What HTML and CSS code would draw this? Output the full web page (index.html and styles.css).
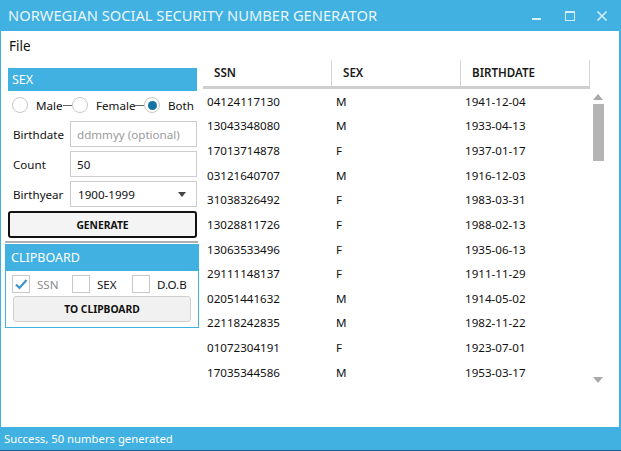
FILE: index.html
```html
<!DOCTYPE html>
<html>
<head>
<meta charset="utf-8">
<link rel="stylesheet" href="styles.css">
</head>
<body>
<div class="window">
  <div class="titlebar">
    <div class="title">NORWEGIAN SOCIAL SECURITY NUMBER GENERATOR</div>
    <div class="controls">
      <svg class="ctl" width="12" height="12" viewBox="0 0 12 12"><rect x="0" y="8" width="9" height="2" fill="#d6eefa"/></svg>
      <svg class="ctl" width="12" height="12" viewBox="0 0 12 12"><rect x="1.5" y="1.5" width="9" height="9" fill="none" stroke="#d6eefa" stroke-width="1"/><rect x="1" y="1" width="10" height="2" fill="#d6eefa"/></svg>
      <svg class="ctl" width="12" height="12" viewBox="0 0 12 12"><path d="M1.5 1.5 L10.5 10.5 M10.5 1.5 L1.5 10.5" stroke="#d6eefa" stroke-width="1.6"/></svg>
    </div>
  </div>
  <div class="menu"><span class="menu-item">File</span></div>
  <div class="main">
    <div class="left">
      <div class="sexbox">
        <div class="group-head">SEX</div>
        <div class="radios">
          <div class="ritem w1"><span class="radio"></span><span class="rlabel">Male</span><span class="rline"></span></div>
          <div class="ritem w2"><span class="radio"></span><span class="rlabel">Female</span><span class="rline"></span></div>
          <div class="ritem"><span class="radio on"></span><span class="rlabel">Both</span></div>
        </div>
        <div class="field">
          <span class="flabel">Birthdate</span>
          <div class="input placeholder">ddmmyy (optional)</div>
        </div>
        <div class="field">
          <span class="flabel">Count</span>
          <div class="input">50</div>
        </div>
        <div class="field">
          <span class="flabel">Birthyear</span>
          <div class="input combo"><span>1900-1999</span><svg width="8" height="5" viewBox="0 0 8 5"><path d="M0 0 H8 L4 5 Z" fill="#444"/></svg></div>
        </div>
        <div class="btn-generate">GENERATE</div>
      </div>
      <div class="sep"></div>
      <div class="clipbox">
        <div class="group-head clip-head">CLIPBOARD</div>
        <div class="clip-body">
          <div class="checks">
            <span class="check on"><svg width="14" height="12" viewBox="0 0 14 12"><path d="M2 6.5 L5.5 10 L12.5 2" fill="none" stroke="#3d94c6" stroke-width="2.2"/></svg></span><span class="clabel dim">SSN</span>
            <span class="check"></span><span class="clabel">SEX</span>
            <span class="check"></span><span class="clabel">D.O.B</span>
          </div>
          <div class="btn-clip">TO CLIPBOARD</div>
        </div>
      </div>
    </div>
    <div class="right">
      <div class="thead">
        <div class="th">SSN</div>
        <div class="th">SEX</div>
        <div class="th">BIRTHDATE</div>
      </div>
      <div class="tbody-wrap">
        <div class="tbody">
          <div class="tr"><span>04124117130</span><span>M</span><span>1941-12-04</span></div>
          <div class="tr"><span>13043348080</span><span>M</span><span>1933-04-13</span></div>
          <div class="tr"><span>17013714878</span><span>F</span><span>1937-01-17</span></div>
          <div class="tr"><span>03121640707</span><span>M</span><span>1916-12-03</span></div>
          <div class="tr"><span>31038326492</span><span>F</span><span>1983-03-31</span></div>
          <div class="tr"><span>13028811726</span><span>F</span><span>1988-02-13</span></div>
          <div class="tr"><span>13063533496</span><span>F</span><span>1935-06-13</span></div>
          <div class="tr"><span>29111148137</span><span>F</span><span>1911-11-29</span></div>
          <div class="tr"><span>02051441632</span><span>M</span><span>1914-05-02</span></div>
          <div class="tr"><span>22118242835</span><span>M</span><span>1982-11-22</span></div>
          <div class="tr"><span>01072304191</span><span>F</span><span>1923-07-01</span></div>
          <div class="tr"><span>17035344586</span><span>M</span><span>1953-03-17</span></div>
        </div>
        <div class="scrollbar">
          <svg width="10" height="6" viewBox="0 0 10 6"><path d="M0 6 L5 0 L10 6 Z" fill="#a9a9a9"/></svg>
          <div class="thumb"></div>
          <div class="track"></div>
          <svg width="10" height="6" viewBox="0 0 10 6"><path d="M0 0 L10 0 L5 6 Z" fill="#a9a9a9"/></svg>
        </div>
      </div>
    </div>
  </div>
  <div class="status">Success, 50 numbers generated</div>
</div>
</body>
</html>
```

FILE: styles.css
```css
* { box-sizing: border-box; }
html, body { margin: 0; padding: 0; }
body {
  width: 621px;
  height: 451px;
  overflow: hidden;
  font-family: "Noto Sans", "Open Sans", sans-serif;
  color: #111;
  background: #fff;
}
.window {
  width: 621px;
  height: 451px;
  border-left: 1px solid #41b1e1;
  border-right: 2px solid #41b1e1;
  display: flex;
  flex-direction: column;
}
.titlebar {
  height: 31px;
  background: #41b1e1;
  display: flex;
  align-items: center;
  justify-content: space-between;
  margin: 0 -2px 0 -1px;
  padding-left: 8px;
}
.title {
  color: #eaf6fc;
  font-size: 14.7px;
  white-space: nowrap;
  padding-bottom: 1px;
}
.controls {
  display: flex;
  gap: 20px;
  padding-right: 13px;
  padding-top: 1px;
}
.ctl { display: block; }
.menu {
  height: 29px;
  padding: 6px 0 0 8px;
  font-size: 13.5px;
}
.main {
  flex: 1;
  display: flex;
  padding-left: 4px;
}
.left {
  width: 194px;
  padding-top: 8px;
  display: flex;
  flex-direction: column;
}
.sexbox {
  margin: 0 2px 0 3px;
}
.group-head {
  background: #41b1e1;
  color: #fff;
  font-size: 12.5px;
  height: 23px;
  line-height: 23px;
  padding-left: 4px;
}
.radios {
  display: flex;
  align-items: center;
  height: 28px;
  padding-left: 4px;
  font-size: 11.6px;
}
.ritem {
  display: flex;
  align-items: center;
  white-space: nowrap;
}
.ritem.w1 { width: 60px; }
.ritem.w2 { width: 72px; }
.radio {
  width: 16px;
  height: 16px;
  border: 1px solid #c8c8c8;
  border-radius: 50%;
  display: inline-flex;
  align-items: center;
  justify-content: center;
  flex: none;
}
.radio.on::after {
  content: "";
  width: 9px;
  height: 9px;
  border-radius: 50%;
  background: #1473a6;
}
.rlabel { margin-left: 8px; }
.rline {
  flex: 1;
  height: 1px;
  background: #666;
}
.field {
  display: flex;
  align-items: center;
  height: 26px;
  margin-top: 4px;
}
.radios + .field { margin-top: 2px; }
.flabel {
  width: 62px;
  padding-left: 5px;
  font-size: 11.6px;
}
.input {
  flex: 1;
  height: 26px;
  border: 1px solid #cccccc;
  font-size: 11.6px;
  display: flex;
  align-items: center;
  padding-left: 6px;
  color: #111;
}
.input.placeholder { color: #9a9a9a; }
.combo {
  justify-content: space-between;
  padding-left: 7px;
  padding-right: 10px;
}
.combo svg { display: block; }
.btn-generate {
  margin-top: 4px;
  height: 27px;
  border: 2px solid #111;
  border-radius: 3px;
  background: #f4f4f4;
  display: flex;
  align-items: center;
  justify-content: center;
  font-weight: bold;
  font-size: 10.3px;
}
.sep {
  height: 2px;
  background: #b0b0b0;
  margin: 3px 1px 0 0;
}
.clipbox {
  margin-top: 1px;
  border: 1px solid #41b1e1;
  width: 194px;
}
.clip-head {
  height: 26px;
  line-height: 26px;
  padding-left: 5px;
}
.clip-body {
  padding: 4px 6px 5px 6px;
}
.checks {
  display: flex;
  align-items: center;
  height: 18px;
  font-size: 11.6px;
}
.check {
  width: 18px;
  height: 18px;
  border: 1px solid #c8c8c8;
  display: inline-flex;
  align-items: center;
  justify-content: center;
  flex: none;
}
.check svg { display: block; }
.clabel { margin-left: 7px; width: 36px; }
.clabel.dim { color: #8a8a8a; }
.btn-clip {
  margin: 3px 1px 0 1px;
  height: 26px;
  border: 1px solid #cfcfcf;
  border-radius: 3px;
  background: #f1f1f1;
  display: flex;
  align-items: center;
  justify-content: center;
  font-weight: bold;
  font-size: 10.3px;
}
.right {
  flex: 1;
  margin-left: 4px;
  display: flex;
  flex-direction: column;
}
.thead {
  display: flex;
  height: 29px;
  width: 387px;
  border-bottom: 3px solid #cfcfcf;
}
.th {
  width: 129px;
  border-right: 1px solid #d4d4d4;
  font-size: 11.6px;
  font-weight: 600;
  padding: 5px 0 0 11px;
  color: #1a1a1a;
}
.tbody-wrap {
  display: flex;
  flex: 1;
}
.tbody {
  width: 387px;
}
.tr {
  display: flex;
  height: 24.64px;
  align-items: center;
  font-size: 11.6px;
}
.tr span { width: 129px; padding-left: 4px; }
.scrollbar {
  width: 16px;
  display: flex;
  flex-direction: column;
  align-items: center;
  padding-top: 5px;
  height: 294px;
}
.scrollbar svg { display: block; flex: none; }
.thumb {
  width: 11px;
  height: 57px;
  background: #b4b4b4;
  margin-top: 4px;
}
.track { flex: 1; }
.status {
  height: 24px;
  background: #41b1e1;
  color: #fff;
  font-size: 11.3px;
  padding-left: 4px;
  line-height: 23px;
  margin: 0 -2px 0 -1px;
  border-bottom: 1px solid #1d5c8c;
}
```
